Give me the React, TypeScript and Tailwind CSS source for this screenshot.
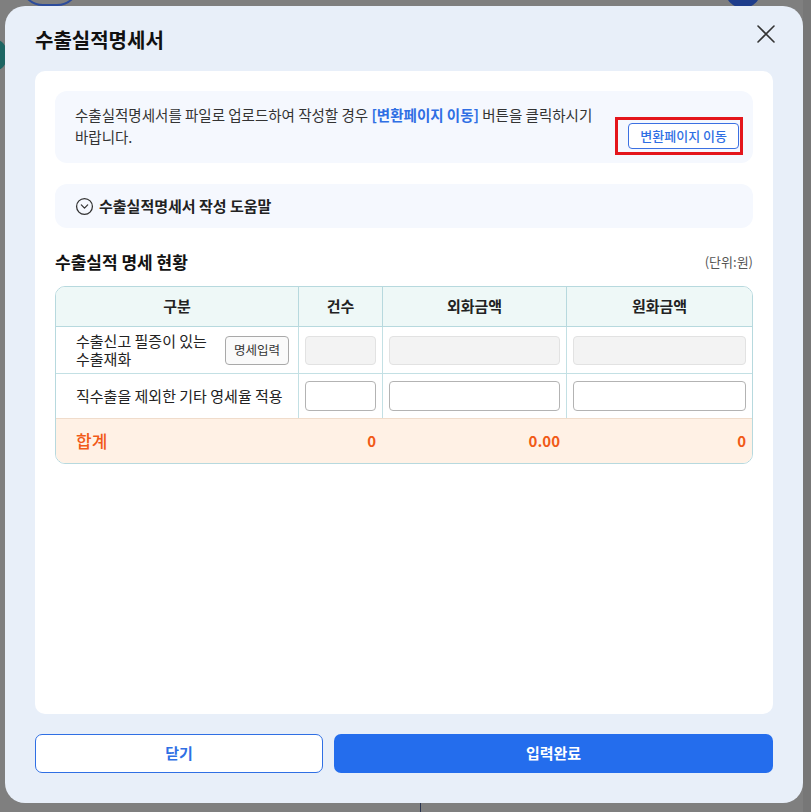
import React from 'react';
import { CircleChevronDown } from 'lucide-react';

const font = { fontFamily: '"Noto Sans CJK KR", "Noto Sans", sans-serif' };

function CloseIcon() {
    return (
        <svg width="18" height="18" viewBox="0 0 18 18" fill="none" stroke="#333" strokeWidth="1.6" strokeLinecap="round">
            <path d="M1 1L17 17M17 1L1 17" />
        </svg>
    );
}

export default function App() {
    return (
        <div className="relative w-[811px] h-[812px] bg-[#7f7f7f] overflow-hidden" style={font}>
            {/* dimmed page behind the dialog */}
            <div className="absolute left-[20px] -top-[40px] w-[60px] h-[46px] rounded-full border-2 border-[#2c4c9c]" />
            <div className="absolute -left-[14px] top-[40px] w-[20px] h-[30px] rounded-full bg-[#1d6664]" />
            <div className="absolute left-[725px] -top-[28px] w-[36px] h-[36px] rounded-full bg-[#1e3d8c]" />
            <div className="absolute left-[803px] top-0 w-[8px] h-[812px] bg-[#777]" />
            <div className="absolute left-[420px] top-[803px] w-[1px] h-[9px] bg-[#2a3550]" />

            <div className="relative ml-[5px] mt-[6px] w-[798px] h-[797px] bg-[#e8eff9] rounded-[20px] px-[30px] pb-[30px] flex flex-col">
                {/* header */}
                <div className="h-[65px] flex items-center justify-between pt-[3px]">
                    <h1 className="text-[20px] font-bold text-[#111]">수출실적명세서</h1>
                    <button className="mr-[-2px] mt-[-12px]">
                        <CloseIcon />
                    </button>
                </div>

                {/* content */}
                <div className="flex-1 bg-white rounded-[10px] px-[20px] pt-[20px]">
                    <div className="h-[72px] rounded-[12px] bg-[#f5f8fe] px-[20px] flex justify-between">
                        <p className="w-[525px] pt-[13px] text-[14.5px] leading-[22px] text-[#333]">
                            수출실적명세서를 파일로 업로드하여 작성할 경우{' '}
                            <span className="font-bold text-[#2f6fe4]">[변환페이지 이동]</span> 버튼을 클릭하시기 바랍니다.
                        </p>
                        <div className="relative self-end mb-[14px] mr-[-6px]">
                            <div className="absolute -left-[13px] -right-[4px] -top-[5px] -bottom-[6px] border-[3px] border-[#e4161c] pointer-events-none" />
                            <button className="h-[26px] px-[11px] rounded-[4px] border border-[#3b70e2] bg-white text-[13px] font-medium text-[#2f6fe4]">
                                변환페이지 이동
                            </button>
                        </div>
                    </div>

                    <div className="mt-[21px] h-[44px] rounded-[12px] bg-[#f5f8fe] px-[20px] flex items-center gap-[5px]">
                        <CircleChevronDown size={19} strokeWidth={1.6} className="text-[#333]" />
                        <span className="text-[15px] font-bold text-[#222]">수출실적명세서 작성 도움말</span>
                    </div>

                    <div className="mt-[22px] h-[24px] flex items-center justify-between">
                        <h2 className="text-[17px] font-bold text-[#111]">수출실적 명세 현황</h2>
                        <span className="text-[13px] text-[#555]">(단위:원)</span>
                    </div>

                    {/* table */}
                    <div className="mt-[12px] rounded-[10px] border border-[#b7d9de] overflow-hidden text-[#222]">
                        <div className="grid grid-cols-[243px_84px_184px_1fr] h-[40px] bg-[#eef8f7] border-b border-[#b7d9de] text-[15px] font-bold">
                            <div className="flex items-center justify-center border-r border-[#b7d9de]">구분</div>
                            <div className="flex items-center justify-center border-r border-[#b7d9de]">건수</div>
                            <div className="flex items-center justify-center border-r border-[#b7d9de]">외화금액</div>
                            <div className="flex items-center justify-center">원화금액</div>
                        </div>

                        <div className="grid grid-cols-[243px_84px_184px_1fr] h-[47px] border-b border-[#c3e0e4] text-[15px]">
                            <div className="flex items-center justify-between pl-[20px] pr-[9px] border-r border-[#c3e0e4]">
                                <span className="leading-[18px]">
                                    수출신고 필증이 있는
                                    <br />
                                    수출재화
                                </span>
                                <button className="h-[29px] px-[8px] rounded-[4px] border border-[#a9a9a9] bg-[#fafafa] text-[12.5px] text-[#333]">
                                    명세입력
                                </button>
                            </div>
                            <div className="flex items-center px-[6px] border-r border-[#c3e0e4]">
                                <div className="w-full h-[29px] rounded-[4px] border border-[#e2e2e2] bg-[#f3f3f3]" />
                            </div>
                            <div className="flex items-center px-[6px] border-r border-[#c3e0e4]">
                                <div className="w-full h-[29px] rounded-[4px] border border-[#e2e2e2] bg-[#f3f3f3]" />
                            </div>
                            <div className="flex items-center px-[6px]">
                                <div className="w-full h-[29px] rounded-[4px] border border-[#e2e2e2] bg-[#f3f3f3]" />
                            </div>
                        </div>

                        <div className="grid grid-cols-[243px_84px_184px_1fr] h-[45px] border-b border-[#f0dccb] text-[15px]">
                            <div className="flex items-center pl-[20px] border-r border-[#c3e0e4]">직수출을 제외한 기타 영세율 적용</div>
                            <div className="flex items-center px-[6px] border-r border-[#c3e0e4]">
                                <input className="w-full h-[30px] rounded-[4px] border border-[#b3b3b3] bg-white" />
                            </div>
                            <div className="flex items-center px-[6px] border-r border-[#c3e0e4]">
                                <input className="w-full h-[30px] rounded-[4px] border border-[#b3b3b3] bg-white" />
                            </div>
                            <div className="flex items-center px-[6px]">
                                <input className="w-full h-[30px] rounded-[4px] border border-[#b3b3b3] bg-white" />
                            </div>
                        </div>

                        <div className="grid grid-cols-[243px_84px_184px_1fr] h-[44px] bg-[#fff1e5] text-[#f15a17] font-bold">
                            <div className="flex items-center pl-[20px] text-[17px] font-medium">합계</div>
                            <div className="flex items-center justify-end pr-[7px] text-[15px]">0</div>
                            <div className="flex items-center justify-end pr-[7px] text-[15px]">0.00</div>
                            <div className="flex items-center justify-end pr-[6px] text-[15px]">0</div>
                        </div>
                    </div>
                </div>

                {/* footer */}
                <div className="mt-[20px] flex gap-[11px]">
                    <button className="w-[288px] h-[39px] rounded-[7px] border border-[#2f6fe4] bg-white text-[15px] font-bold text-[#2f6fe4]">
                        닫기
                    </button>
                    <button className="flex-1 h-[39px] rounded-[7px] bg-[#246ded] text-[15px] font-bold text-white">
                        입력완료
                    </button>
                </div>
            </div>
        </div>
    );
}
